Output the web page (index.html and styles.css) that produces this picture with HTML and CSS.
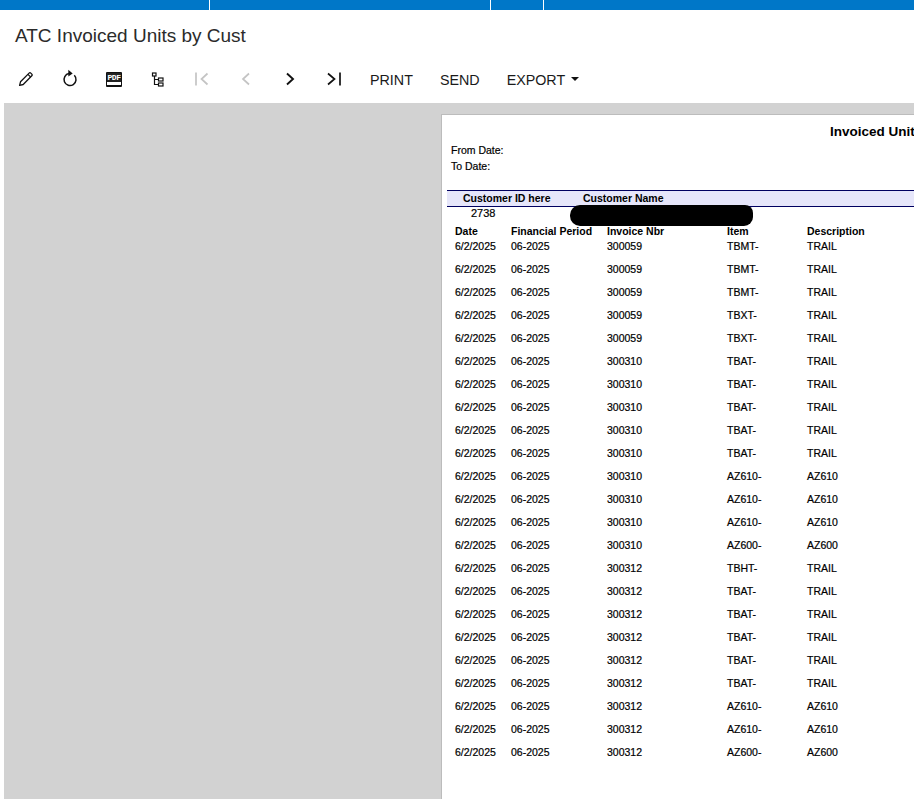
FILE: index.html
```html
<!DOCTYPE html>
<html lang="en">
<head>
<meta charset="utf-8">
<title>ATC Invoiced Units by Cust</title>
<link rel="stylesheet" href="styles.css">
</head>
<body>
<div class="topbar">
  <div class="seg seg1"></div><div class="seg seg2"></div><div class="seg seg3"></div><div class="seg seg4"></div>
</div>
<h1 class="title">ATC Invoiced Units by Cust</h1>
<div class="toolbar">
  <button class="icon-btn" aria-label="Edit"><svg width="16" height="16" viewBox="0 0 16 16" fill="none" stroke="#111" stroke-width="1.3"><path d="M1.6 14.4l.9-3.6 8.6-8.7c.5-.5 1.2-.5 1.7 0l1 1c.5.5.5 1.200 0 1.700l-8.600 8.700z" stroke-linejoin="round"/><path d="M10 3.400l2.700 2.700" /></svg></button>
  <button class="icon-btn" aria-label="Refresh"><svg class="refresh" width="16" height="18" viewBox="0 0 16 18" fill="none" stroke="#111" stroke-width="1.500"><path d="M7 4.600A6 6 0 1 0 12.300 6.300"/><path d="M6.300 .8l4.400 3.800-4.400 3z" fill="#111" stroke="none"/></svg></button>
  <button class="icon-btn" aria-label="PDF"><span class="pdf"><span class="pdf-label">PDF</span></span></button>
  <button class="icon-btn" aria-label="Tree"><svg width="14" height="15" viewBox="0 0 14 15" fill="none" stroke="#111" stroke-width="1.200"><rect x="1.500" y="1" width="3.500" height="3"/><rect x="7.500" y="6" width="4.500" height="3"/><rect x="7.500" y="11" width="4.500" height="3"/><path d="M3.500 4v8.500h4M3.500 7.500h4"/></svg></button>
  <button class="icon-btn" aria-label="First"><svg width="16" height="14" viewBox="0 0 16 14" fill="none" stroke="#c4c4c4" stroke-width="1.700"><path d="M2 .5v13M13.500 1.500l-6 5.500 6 5.500"/></svg></button>
  <button class="icon-btn" aria-label="Previous"><svg width="10" height="14" viewBox="0 0 10 14" fill="none" stroke="#c4c4c4" stroke-width="1.700"><path d="M8 1.500L2 7l6 5.500"/></svg></button>
  <button class="icon-btn" aria-label="Next"><svg width="10" height="14" viewBox="0 0 10 14" fill="none" stroke="#111" stroke-width="1.900"><path d="M2 1.500L8 7l-6 5.500"/></svg></button>
  <button class="icon-btn" aria-label="Last"><svg width="16" height="14" viewBox="0 0 16 14" fill="none" stroke="#111" stroke-width="1.700"><path d="M2 1.500L8.500 7 2 12.500M14 .5v13"/></svg></button>
  <button class="text-btn print">PRINT</button>
  <button class="text-btn send">SEND</button>
  <button class="text-btn export">EXPORT<span class="caret"></span></button>
</div>
<main class="viewer">
  <section class="report">
    <div class="report-title">Invoiced Units by Customer</div>
    <div class="params">
      <div class="param">From Date:</div>
      <div class="param">To Date:</div>
    </div>
    <div class="group-head">
      <span class="gh-id">Customer ID here</span>
      <span class="gh-name">Customer Name</span>
    </div>
    <div class="cust-id">2738</div>
    <div class="redact"></div>
    <div class="row head"><span>Date</span><span>Financial Period</span><span>Invoice Nbr</span><span>Item</span><span>Description</span></div>
    <div class="row"><span>6/2/2025</span><span>06-2025</span><span>300059</span><span>TBMT-</span><span>TRAIL</span></div>
    <div class="row"><span>6/2/2025</span><span>06-2025</span><span>300059</span><span>TBMT-</span><span>TRAIL</span></div>
    <div class="row"><span>6/2/2025</span><span>06-2025</span><span>300059</span><span>TBMT-</span><span>TRAIL</span></div>
    <div class="row"><span>6/2/2025</span><span>06-2025</span><span>300059</span><span>TBXT-</span><span>TRAIL</span></div>
    <div class="row"><span>6/2/2025</span><span>06-2025</span><span>300059</span><span>TBXT-</span><span>TRAIL</span></div>
    <div class="row"><span>6/2/2025</span><span>06-2025</span><span>300310</span><span>TBAT-</span><span>TRAIL</span></div>
    <div class="row"><span>6/2/2025</span><span>06-2025</span><span>300310</span><span>TBAT-</span><span>TRAIL</span></div>
    <div class="row"><span>6/2/2025</span><span>06-2025</span><span>300310</span><span>TBAT-</span><span>TRAIL</span></div>
    <div class="row"><span>6/2/2025</span><span>06-2025</span><span>300310</span><span>TBAT-</span><span>TRAIL</span></div>
    <div class="row"><span>6/2/2025</span><span>06-2025</span><span>300310</span><span>TBAT-</span><span>TRAIL</span></div>
    <div class="row"><span>6/2/2025</span><span>06-2025</span><span>300310</span><span>AZ610-</span><span>AZ610</span></div>
    <div class="row"><span>6/2/2025</span><span>06-2025</span><span>300310</span><span>AZ610-</span><span>AZ610</span></div>
    <div class="row"><span>6/2/2025</span><span>06-2025</span><span>300310</span><span>AZ610-</span><span>AZ610</span></div>
    <div class="row"><span>6/2/2025</span><span>06-2025</span><span>300310</span><span>AZ600-</span><span>AZ600</span></div>
    <div class="row"><span>6/2/2025</span><span>06-2025</span><span>300312</span><span>TBHT-</span><span>TRAIL</span></div>
    <div class="row"><span>6/2/2025</span><span>06-2025</span><span>300312</span><span>TBAT-</span><span>TRAIL</span></div>
    <div class="row"><span>6/2/2025</span><span>06-2025</span><span>300312</span><span>TBAT-</span><span>TRAIL</span></div>
    <div class="row"><span>6/2/2025</span><span>06-2025</span><span>300312</span><span>TBAT-</span><span>TRAIL</span></div>
    <div class="row"><span>6/2/2025</span><span>06-2025</span><span>300312</span><span>TBAT-</span><span>TRAIL</span></div>
    <div class="row"><span>6/2/2025</span><span>06-2025</span><span>300312</span><span>TBAT-</span><span>TRAIL</span></div>
    <div class="row"><span>6/2/2025</span><span>06-2025</span><span>300312</span><span>AZ610-</span><span>AZ610</span></div>
    <div class="row"><span>6/2/2025</span><span>06-2025</span><span>300312</span><span>AZ610-</span><span>AZ610</span></div>
    <div class="row"><span>6/2/2025</span><span>06-2025</span><span>300312</span><span>AZ600-</span><span>AZ600</span></div>
  </section>
</main>
</body>
</html>
```
FILE: styles.css
```css
* { box-sizing: border-box; }
html, body { margin: 0; height: 799px; overflow: hidden; background: #fff; }
body { font-family: "Liberation Sans", Arial, sans-serif; color: #111; width: 914px; display: flex; flex-direction: column; }

.topbar { display: flex; height: 10px; background: #0077c8; flex: none; }
.seg { height: 10px; border-right: 1px solid #fff; }
.seg1 { width: 210px; }
.seg2 { width: 281px; }
.seg3 { width: 53px; }
.seg4 { flex: 1; border-right: 0; }

.title { margin: 0; padding: 15px 0 0 15px; height: 50px; font-size: 19px; line-height: 22px; font-weight: 400; color: #2b2b2b; flex: none; }

.toolbar { display: flex; align-items: center; height: 43px; flex: none; padding: 0 0 5px 4px; }
.icon-btn { width: 44px; height: 38px; display: flex; align-items: center; justify-content: center; border: 0; background: none; padding: 0; }
.refresh { margin-top: -2px; }
.text-btn { border: 0; background: none; padding: 0; font: 400 14.3px/20px "Liberation Sans", Arial, sans-serif; color: #1a1a1a; display: flex; align-items: center; position: relative; top: 1px; }
.print { margin-left: 14px; }
.send { margin-left: 27px; }
.export { margin-left: 27px; }
.caret { margin-left: 6px; width: 0; height: 0; border-left: 4px solid transparent; border-right: 4px solid transparent; border-top: 4px solid #111; position: relative; top: -1px; }

.pdf { width: 16px; height: 15px; border: 1px solid #111; border-bottom-width: 2px; border-radius: 1px; display: block; background: #fff; overflow: hidden; }
.pdf-label { display: block; height: 9px; background: #222; color: #fff; font: 700 8px/9px "Liberation Mono", monospace; letter-spacing: -.4px; text-align: center; }

.viewer { flex: 1; background: #d2d2d2; margin-left: 4px; padding: 11px 0 0 437px; overflow: hidden; min-height: 0; }
.report { position: relative; width: 900px; height: 700px; background: #fff; border: 1px solid #bcbcbc; border-right: 0; padding: 9px 0 0 5px; font-size: 11px; line-height: 13px; color: #000; -webkit-text-stroke: .2px #000; }

.report-title { padding-left: 383px; font-size: 13.5px; line-height: 15px; font-weight: 700; white-space: nowrap; -webkit-text-stroke: 0; }
.params { margin: 4px 0 0 4px; height: 47px; font-size: 10.5px; position: relative; top: -1px; }
.param { height: 16px; line-height: 16px; }
.group-head { height: 17px; width: 100%; background: #e6e6fa; border-top: 1px solid #000060; border-bottom: 1px solid #000060; font-weight: 700; font-size: 10.5px; line-height: 14px; display: flex; -webkit-text-stroke: 0; }
.gh-id { margin-left: 16px; width: 120px; }
.cust-id { padding-left: 24px; height: 16px; line-height: 13px; }
.redact { position: absolute; left: 128px; top: 90px; width: 183px; height: 21px; background: #000; border-radius: 10px 8px 9px 10px; }

.row { display: grid; grid-template-columns: 56px 96px 120px 80px 1fr; padding-left: 8px; height: 23px; line-height: 13px; font-size: 10.5px; }
.row.head { height: 16px; font-weight: 700; line-height: 15px; margin-top: 1px; -webkit-text-stroke: 0; }
.row span { white-space: nowrap; }
```
